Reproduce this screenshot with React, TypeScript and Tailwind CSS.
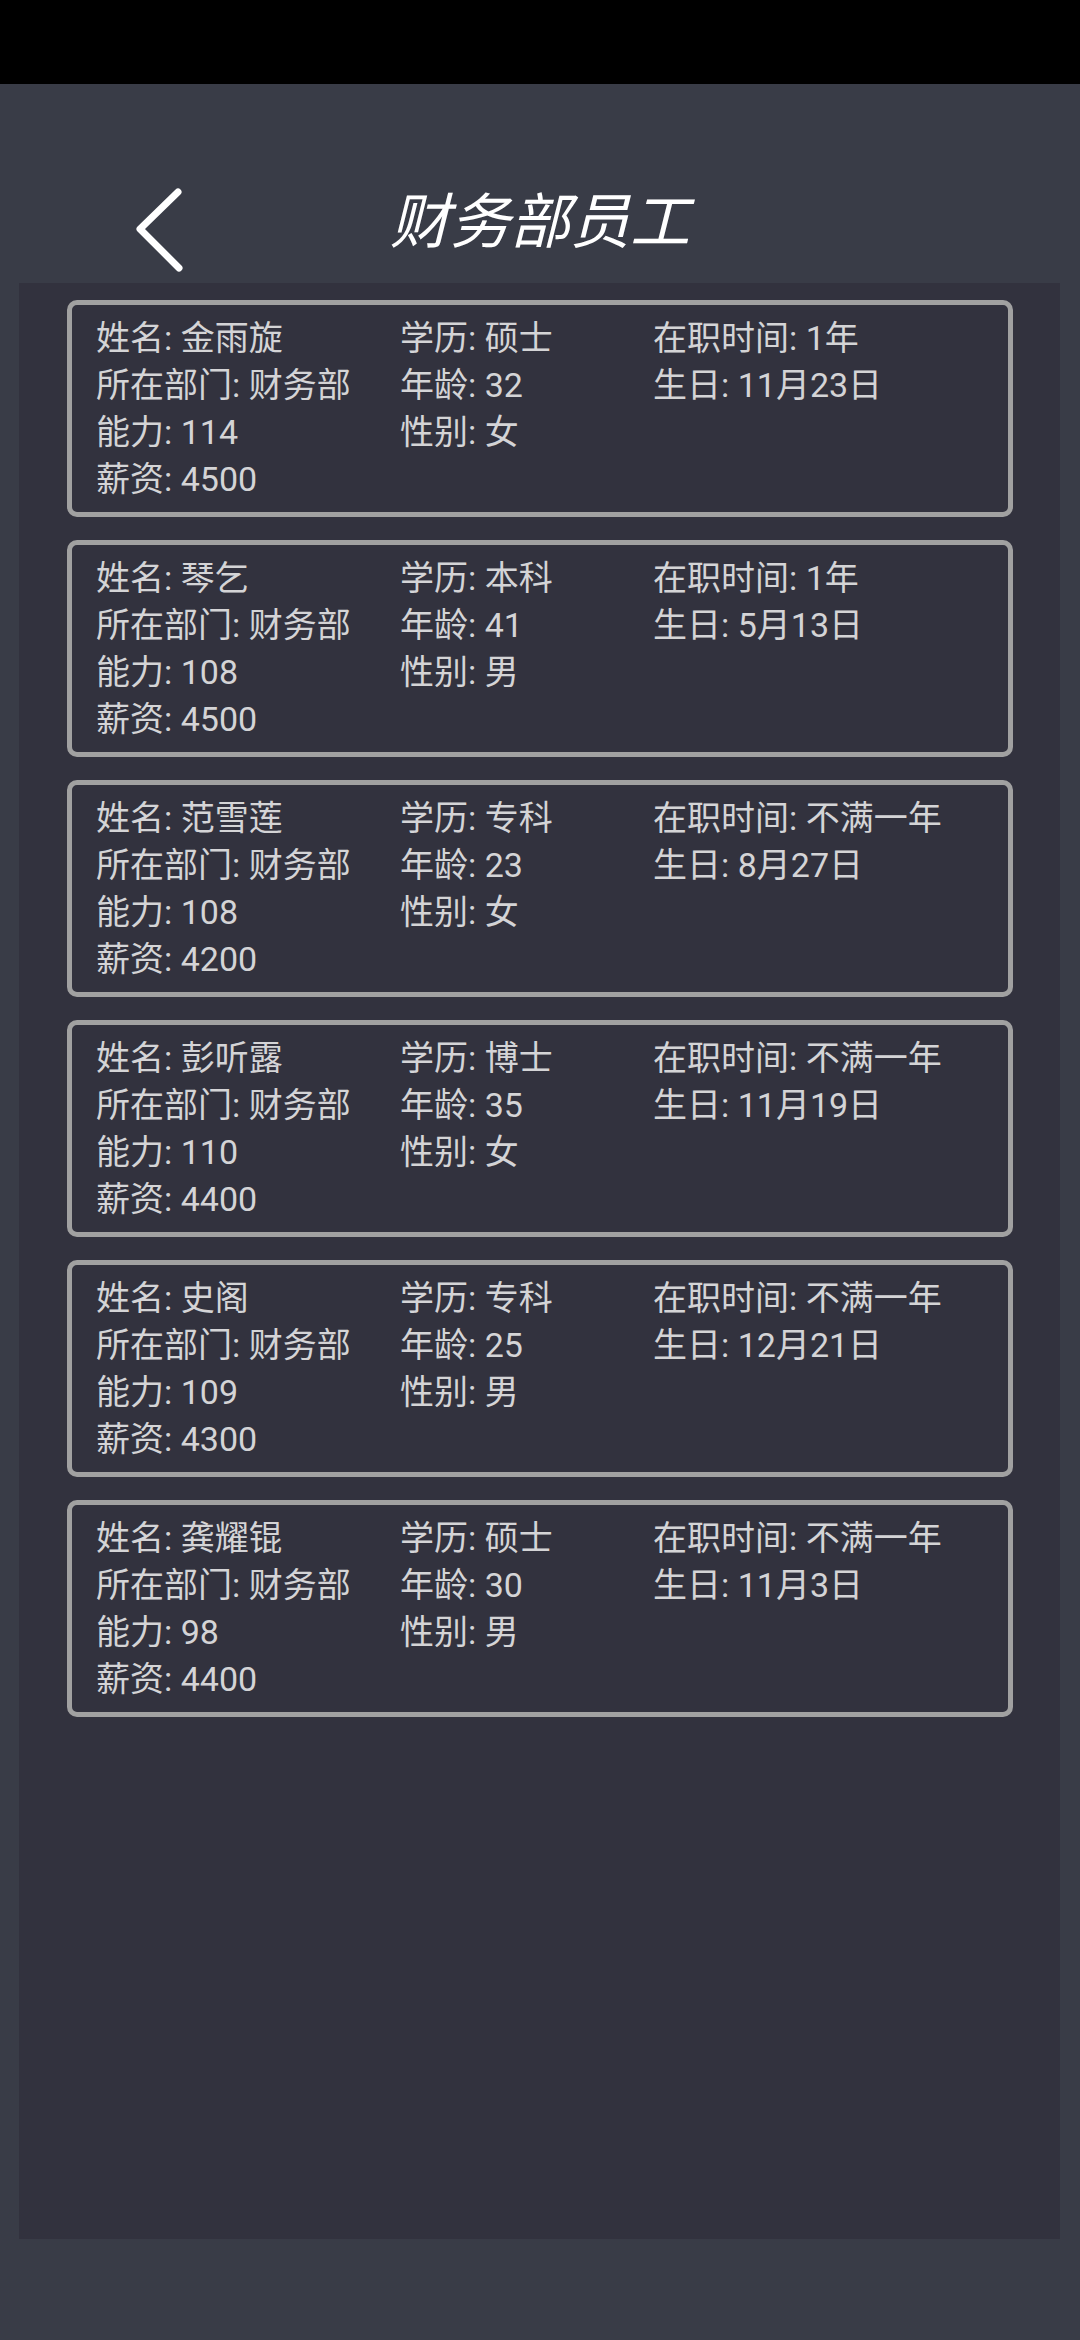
import React from 'react';

interface Staff {
  name: string;
  edu: string;
  tenure: string;
  age: number;
  birthday: string;
  ability: number;
  gender: string;
  salary: number;
}

const staff: Staff[] = [
  { name: '金雨旋', edu: '硕士', tenure: '1年', age: 32, birthday: '11月23日', ability: 114, gender: '女', salary: 4500 },
  { name: '琴乞', edu: '本科', tenure: '1年', age: 41, birthday: '5月13日', ability: 108, gender: '男', salary: 4500 },
  { name: '范雪莲', edu: '专科', tenure: '不满一年', age: 23, birthday: '8月27日', ability: 108, gender: '女', salary: 4200 },
  { name: '彭听露', edu: '博士', tenure: '不满一年', age: 35, birthday: '11月19日', ability: 110, gender: '女', salary: 4400 },
  { name: '史阁', edu: '专科', tenure: '不满一年', age: 25, birthday: '12月21日', ability: 109, gender: '男', salary: 4300 },
  { name: '龚耀锟', edu: '硕士', tenure: '不满一年', age: 30, birthday: '11月3日', ability: 98, gender: '男', salary: 4400 },
];

const StaffCard: React.FC<{ s: Staff }> = ({ s }) => (
  <div className="border-[5px] border-[#a1a1a1] rounded-[10px] px-[24px] pt-[10px] pb-[9px] text-[34px] leading-[47px] text-[#d4d4d6] grid grid-cols-[304px_253px_1fr] whitespace-nowrap">
    <div>姓名: {s.name}</div>
    <div>学历: {s.edu}</div>
    <div>在职时间: {s.tenure}</div>
    <div>所在部门: 财务部</div>
    <div>年龄: {s.age}</div>
    <div>生日: {s.birthday}</div>
    <div>能力: {s.ability}</div>
    <div>性别: {s.gender}</div>
    <div></div>
    <div>薪资: {s.salary}</div>
  </div>
);

export default function App() {
  return (
    <div
      className="w-[1080px] h-[2340px] bg-[#393c47] flex flex-col overflow-hidden"
      style={{ fontFamily: 'Roboto, "Noto Sans CJK SC", sans-serif' }}
    >
      {/* status bar */}
      <div className="h-[84px] bg-black shrink-0"></div>

      {/* header */}
      <div className="h-[199px] shrink-0 pt-[95px]">
        <div className="grid grid-cols-[1fr_auto_1fr] items-start">
          <div className="pl-[134px] pt-[9px] flex items-center">
            <svg width="51" height="84" viewBox="0 0 51 84" fill="none">
              <path d="M44 4 L6 41 L45 80" stroke="#ffffff" strokeWidth="7" strokeLinecap="round" strokeLinejoin="round" />
            </svg>
          </div>
          <div
            className="text-white text-[60px] leading-[76px] italic"
            style={{ fontFamily: '"Noto Sans CJK SC", sans-serif' }}
          >
            财务部员工
          </div>
          <div></div>
        </div>
      </div>

      {/* list panel */}
      <div className="ml-[19px] w-[1041px] h-[1956px] bg-[#32323e] pt-[17px] pl-[48px] pr-[47px] flex flex-col gap-[23px]">
        {staff.map((s) => (
          <StaffCard key={s.name} s={s} />
        ))}
      </div>
    </div>
  );
}
